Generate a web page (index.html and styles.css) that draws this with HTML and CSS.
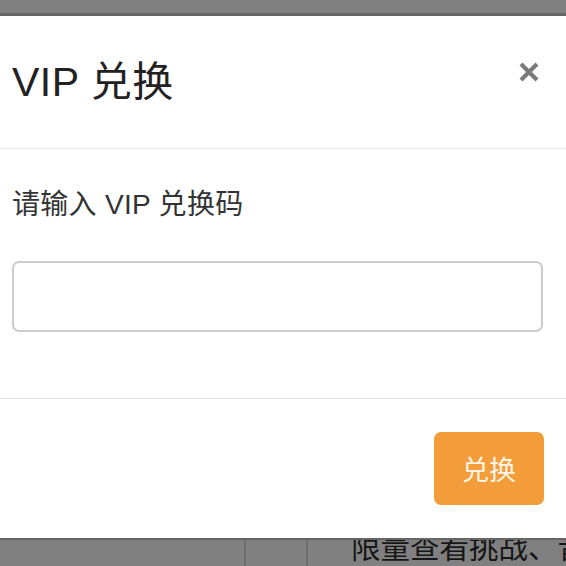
FILE: index.html
```html
<!DOCTYPE html>
<html lang="zh-CN">
<head>
<meta charset="utf-8">
<link rel="stylesheet" href="styles.css">
</head>
<body>
<div class="top-strip"></div>
<div class="modal">
  <div class="modal-header">
    <h1 class="modal-title">VIP 兑换</h1>
    <button class="close" aria-label="关闭">
      <svg width="22" height="22" viewBox="0 0 22 22"><path d="M3 3L19 19M19 3L3 19" stroke="#7a7a7a" stroke-width="4.2" stroke-linecap="butt"/></svg>
    </button>
  </div>
  <div class="modal-body">
    <label class="label">请输入 VIP 兑换码</label>
    <input class="code-input" type="text">
  </div>
  <div class="modal-footer">
    <button class="btn-redeem">兑换</button>
  </div>
</div>
<div class="bottom-strip">
  <div class="cell cell-a"></div>
  <div class="cell cell-b"></div>
  <div class="cell cell-c"><span class="bg-text">限量查看挑战、音</span></div>
</div>
</body>
</html>
```
FILE: styles.css
```css
* { box-sizing: border-box; }
html, body { margin: 0; padding: 0; }
body {
  width: 566px;
  height: 566px;
  overflow: hidden;
  background: #808080;
  font-family: "Liberation Sans", "Noto Sans CJK SC", sans-serif;
  display: flex;
  flex-direction: column;
}
.top-strip {
  height: 16px;
  background: #808080;
  border-bottom: 3px solid #666;
  flex: none;
}
.modal {
  background: #fff;
  height: 522px;
  flex: none;
  display: flex;
  flex-direction: column;
}
.modal-header {
  height: 133px;
  padding: 0 12px;
  border-bottom: 1px solid #e5e5e5;
  display: flex;
  align-items: center;
  justify-content: space-between;
}
.modal-title {
  margin: 0;
  font-size: 41px;
  font-weight: 400;
  color: #222;
  line-height: 46px;
  letter-spacing: 0.5px;
}
.close {
  border: 0;
  background: none;
  padding: 0;
  width: 22px;
  height: 22px;
  margin: 0 14px 20px 0;
  display: flex;
}
.modal-body {
  height: 250px;
  padding: 38px 23px 0 12px;
  border-bottom: 1px solid #e5e5e5;
  display: flex;
  flex-direction: column;
  gap: 38px;
}
.label {
  font-size: 28px;
  line-height: 36px;
  color: #333;
  letter-spacing: 0.3px;
}
.code-input {
  width: 100%;
  height: 71px;
  border: 2px solid #ccc;
  border-radius: 7px;
  background: #fff;
}
.modal-footer {
  flex: 1;
  padding: 33px 22px 0 0;
  display: flex;
  justify-content: flex-end;
  align-items: flex-start;
}
.btn-redeem {
  width: 110px;
  height: 73px;
  border: 0;
  border-radius: 7px;
  background: #f39c3a;
  color: #fff6e6;
  font-family: "Liberation Sans", "Noto Sans CJK SC", sans-serif;
  font-size: 27px;
}
.bottom-strip {
  flex: 1;
  border-top: 2px solid #666;
  display: flex;
  overflow: hidden;
  background: #808080;
}
.cell { height: 100%; }
.cell-a { width: 246px; border-right: 2px solid #6e6e6e; flex: none; }
.cell-b { width: 62px; border-right: 2px solid #6e6e6e; flex: none; }
.cell-c {
  flex: 1;
  padding-left: 43px;
  display: flex;
  align-items: flex-end;
  padding-bottom: 3px;
}
.bg-text {
  font-size: 29.5px;
  line-height: 30px;
  color: #161616;
  white-space: nowrap;
}
```
